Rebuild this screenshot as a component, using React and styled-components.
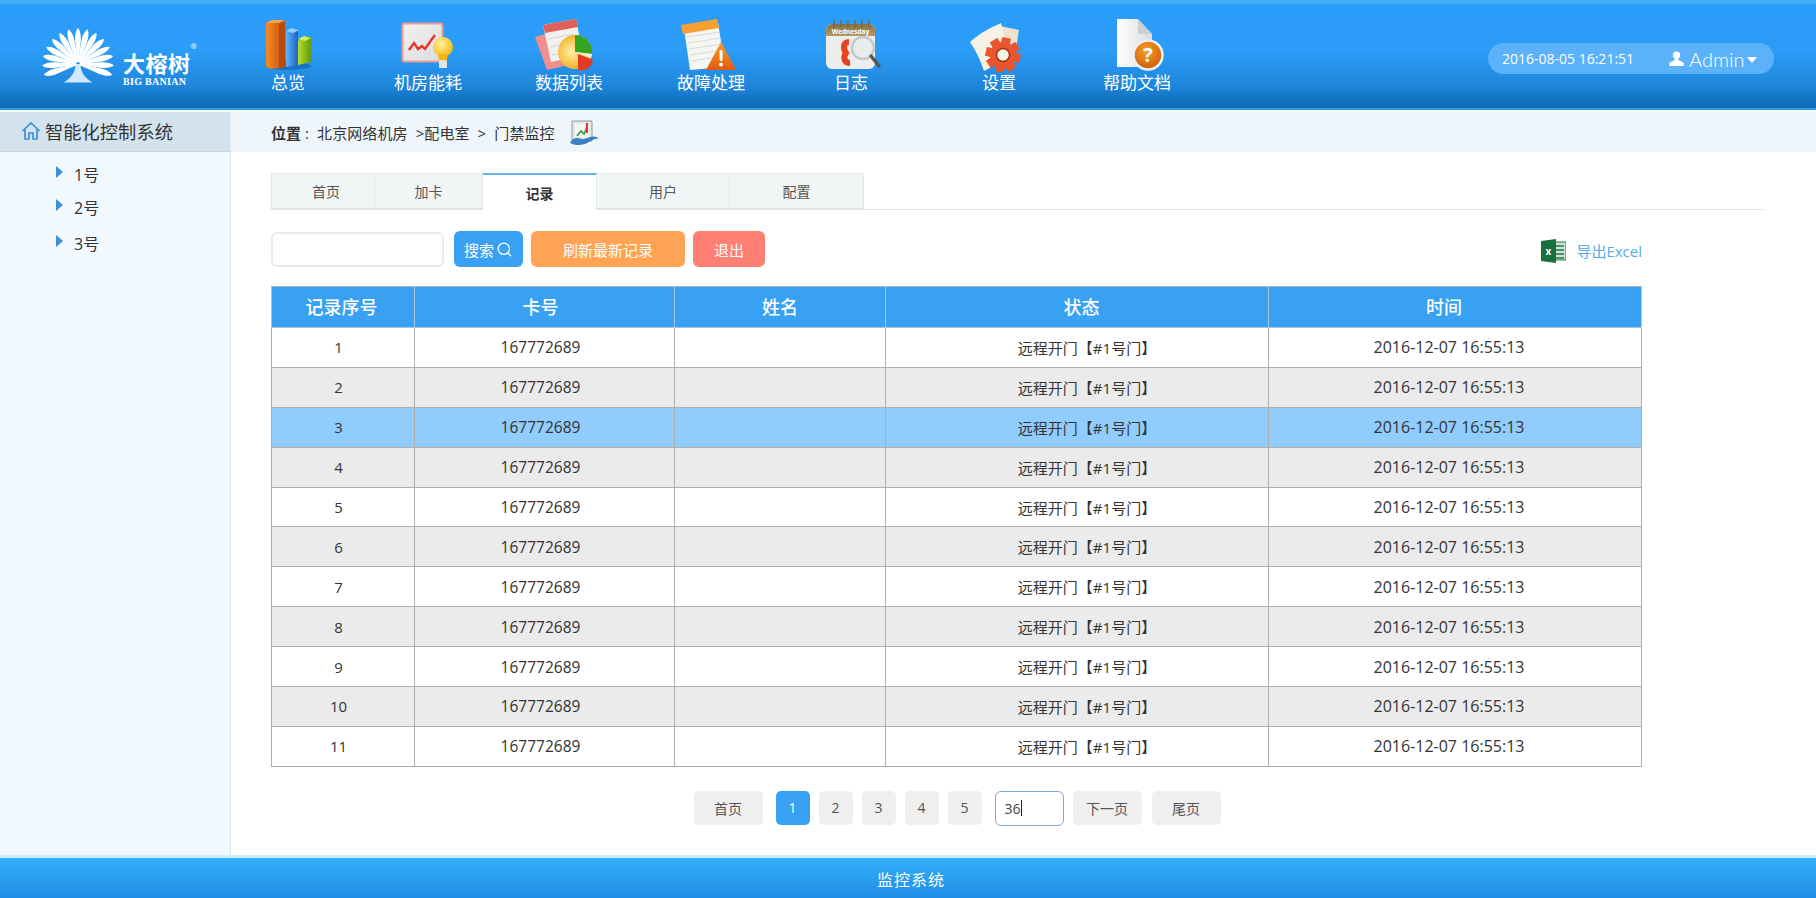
import React from 'react';
import styled, { createGlobalStyle } from 'styled-components';
import { Search } from 'lucide-react';

const FONT = `"Open Sans", "Noto Sans CJK SC", sans-serif`;

const NAV = [
  { label: '总览', x: 248, Icon: ChartIcon },
  { label: '机房能耗', x: 388, Icon: EnergyIcon },
  { label: '数据列表', x: 529, Icon: ListIcon },
  { label: '故障处理', x: 671, Icon: FaultIcon },
  { label: '日志', x: 811, Icon: LogIcon },
  { label: '设置', x: 959, Icon: GearIcon },
  { label: '帮助文档', x: 1097, Icon: HelpIcon },
];

const TREE = [
  { label: '1号', h: 33 },
  { label: '2号', h: 33 },
  { label: '3号', h: 39 },
];

const TABS = [
  { label: '首页', w: 104, pad: 6 },
  { label: '加卡', w: 108 },
  { label: '记录', w: 114, active: true },
  { label: '用户', w: 133 },
  { label: '配置', w: 134 },
];

const COLUMNS = ['记录序号', '卡号', '姓名', '状态', '时间'];
const ROWS = Array.from({ length: 11 }, (_, i) => i + 1);

function IconSvg({ x, children }) {
  return (
    <svg width="80" height="56" viewBox={`${x} 16 80 56`}>
      {children}
    </svg>
  );
}

function ChartIcon({ x }) {
  return (
    <IconSvg x={x}>
      <defs>
        <linearGradient id="barO" x1="0" x2="1" y1="0" y2="0">
          <stop offset="0" stopColor="#f58a22" />
          <stop offset="1" stopColor="#c4500f" />
        </linearGradient>
        <linearGradient id="barB" x1="0" x2="1" y1="0" y2="0">
          <stop offset="0" stopColor="#5fb4f5" />
          <stop offset="1" stopColor="#1c62c8" />
        </linearGradient>
        <linearGradient id="barG" x1="0" x2="1" y1="0" y2="0">
          <stop offset="0" stopColor="#b9dd2a" />
          <stop offset="1" stopColor="#5f9a12" />
        </linearGradient>
      </defs>
      <ellipse cx="288" cy="66" rx="23" ry="4" fill="#0b4f94" opacity=".45" />
      <path d="M298 41l7-4h6v25l-13 3z" fill="url(#barG)" />
      <path d="M298 39l6-3 7 2-6 3z" fill="#d5ec55" />
      <path d="M286 33l5-4 7 1v35l-12 2z" fill="url(#barB)" />
      <path d="M286 31l5-3 8 2-6 3z" fill="#8fd0fa" />
      <path d="M266 23l5-2h14v46l-14 2-5-2z" fill="url(#barO)" />
      <path d="M266 23l6-3h13l-6 3z" fill="#f9a24a" />
      <path d="M279 23h6v44l-6 2z" fill="#b84a0d" />
    </IconSvg>
  );
}

function EnergyIcon({ x }) {
  return (
    <IconSvg x={x}>
      <defs>
        <linearGradient id="card" x1="0" x2="1" y1="0" y2="1">
          <stop offset="0" stopColor="#f5f1ef" />
          <stop offset="1" stopColor="#d9dcdf" />
        </linearGradient>
        <radialGradient id="bulb" cx=".4" cy=".35" r=".7">
          <stop offset="0" stopColor="#fff39a" />
          <stop offset="1" stopColor="#f5b50f" />
        </radialGradient>
      </defs>
      <rect x="402.500" y="23.500" width="40" height="38" rx="2" fill="url(#card)" stroke="#eb9c95" strokeWidth="2" />
      <path d="M409 50l5-7 4 6 4-3 3 3 7-10 3-4" fill="none" stroke="#e8352a" strokeWidth="2.400" />
      <circle cx="443" cy="47" r="10" fill="url(#bulb)" />
      <path d="M438 54h10l-1 6h-8z" fill="#f5b50f" />
      <rect x="439" y="60" width="8" height="8" rx="1" fill="#dfe3e6" />
    </IconSvg>
  );
}

function ListIcon({ x }) {
  return (
    <IconSvg x={x}>
      <defs>
        <radialGradient id="pie" cx=".4" cy=".5" r=".6">
          <stop offset="0" stopColor="#fff1a8" />
          <stop offset="1" stopColor="#f2a40f" />
        </radialGradient>
      </defs>
      <path d="M535 37l24-7 14 34-26 6z" fill="#f08f8c" />
      <path d="M543 25l33-6 7 36-32 7z" fill="#f2f0ee" />
      <path d="M543 25l33-6 2 8-33 6z" fill="#e2605a" />
      <path d="M548 39l26-5M550 47l26-5M552 55l26-5" stroke="#cfd7dd" strokeWidth="1.200" />
      <circle cx="575" cy="52" r="17" fill="url(#pie)" />
      <path d="M575 52V35a17 17 0 0 1 17 19z" fill="#35a41f" />
      <path d="M575 52l17 2a17 17 0 0 1-1 4z" fill="#f2f0ee" />
      <path d="M578 54l15 6a12 12 0 0 1-15 10z" fill="#e33a22" />
    </IconSvg>
  );
}

function FaultIcon({ x }) {
  return (
    <IconSvg x={x}>
      <defs>
        <linearGradient id="warn" x1="0" x2="0" y1="0" y2="1">
          <stop offset="0" stopColor="#fba21f" />
          <stop offset="1" stopColor="#e2590c" />
        </linearGradient>
      </defs>
      <path d="M684 29l34-6 7 44-35 3z" fill="#f5f5f2" />
      <path d="M687 37l33-5M688 43l33-5M689 49l33-5M690 55l33-5M691 61l33-5" stroke="#d9dcdd" strokeWidth="1" />
      <path d="M681 25l36-6 2 9-36 6z" fill="#f9a032" />
      <path d="M721 42l15 28h-30z" fill="url(#warn)" />
      <rect x="719.600" y="50" width="3" height="11" rx="1.200" fill="#fff" />
      <circle cx="721" cy="64.500" r="1.900" fill="#fff" />
    </IconSvg>
  );
}

function LogIcon({ x }) {
  return (
    <IconSvg x={x}>
      <defs>
        <linearGradient id="calTop" x1="0" x2="0" y1="0" y2="1">
          <stop offset="0" stopColor="#8a6f3d" />
          <stop offset="1" stopColor="#b59a62" />
        </linearGradient>
      </defs>
      <rect x="826" y="24" width="49" height="45" rx="6" fill="#ededeb" />
      <path d="M826 36v-6a6 6 0 0 1 6-6h37a6 6 0 0 1 6 6v6z" fill="url(#calTop)" />
      <path d="M834 20v8M841 20v8M848 20v8M855 20v8M862 20v8M869 20v8" stroke="#6e6c66" strokeWidth="1.600" />
      <text x="850.500" y="34" textAnchor="middle" fontSize="6.500" fontWeight="700" fill="#fff" fontFamily="Open Sans, sans-serif">Wednesday</text>
      <path d="M849 42c-6 0-6 7-3 11-3 4-2 10 4 10" fill="none" stroke="#e8431f" strokeWidth="6" />
      <circle cx="863" cy="48" r="11" fill="#e7ecee" fillOpacity=".85" stroke="#c3c8ca" strokeWidth="2.400" />
      <path d="M871 56l8 10" stroke="#555" strokeWidth="3.400" strokeLinecap="round" />
    </IconSvg>
  );
}

function GearIcon({ x }) {
  const teeth = Array.from({ length: 8 }, (_, i) => i * 45);
  return (
    <IconSvg x={x}>
      <path d="M1000 26l19 4-6 36-14-4z" fill="#ece3cf" />
      <path d="M970 42c10-9 20-14 31-19 3 12 6 22 5 36l-22 12c-4-12-8-20-14-29z" fill="#f6f2e6" />
      <g fill="#e8552f">
        {teeth.map((a) => (
          <rect key={a} x="998.500" y="37.500" width="9" height="9" transform={`rotate(${a + 12} 1003 55)`} />
        ))}
        <circle cx="1003" cy="55" r="13" />
      </g>
      <circle cx="1003" cy="55" r="6.500" fill="#f6f2e6" stroke="#a63216" strokeWidth="1.500" />
    </IconSvg>
  );
}

function HelpIcon({ x }) {
  return (
    <IconSvg x={x}>
      <defs>
        <linearGradient id="doc" x1="0" x2="1" y1="0" y2="0">
          <stop offset="0" stopColor="#ffffff" />
          <stop offset="1" stopColor="#d8dde0" />
        </linearGradient>
        <radialGradient id="help" cx=".45" cy=".35" r=".7">
          <stop offset="0" stopColor="#f7a02a" />
          <stop offset="1" stopColor="#cc5507" />
        </radialGradient>
      </defs>
      <path d="M1117 19h21l14 15v33h-35z" fill="url(#doc)" />
      <path d="M1138 19l14 15h-14z" fill="#c9cfd3" />
      <circle cx="1148" cy="55" r="14.500" fill="url(#help)" stroke="#ebeef0" strokeWidth="2.500" />
      <text x="1148" y="62" textAnchor="middle" fontSize="20" fontWeight="700" fill="#fff" fontFamily="Open Sans, sans-serif">?</text>
    </IconSvg>
  );
}

function LogoMark() {
  const petals = Array.from({ length: 15 }, (_, i) => -108 + i * (216 / 14));
  return (
    <svg width="76" height="56" viewBox="0 0 76 56">
      <g fill="#fff">
        {petals.map((a) => (
          <path key={a} d="M38 0c2.600 3 3.400 9 2.600 15L38.600 34h-1.200L35.400 15c-.8-6-.2-12 2.600-15z" transform={`rotate(${a} 38 36)`} />
        ))}
      </g>
      <path d="M35.500 36h5c0 8 4 14 12 18.500h-29c8-4.500 12-10.500 12-18.500z" fill="#fff" opacity=".8" />
    </svg>
  );
}

function ExcelIcon() {
  return (
    <svg width="25" height="24" viewBox="0 0 25 24">
      <rect x="10" y="3" width="15" height="18" fill="#cfe3d4" stroke="#1f7a45" />
      <path d="M15 7h8M15 11h8M15 15h8M15 19h8" stroke="#1f7a45" strokeWidth="1.400" />
      <path d="M0 2l15-2v24L0 22z" fill="#17703e" />
      <text x="7.500" y="16" textAnchor="middle" fontSize="10" fontWeight="700" fill="#fff" fontFamily="Open Sans, sans-serif">x</text>
    </svg>
  );
}

function MonitorIcon() {
  return (
    <svg width="32" height="28" viewBox="0 0 32 28">
      <path d="M3 2h20v20H3z" fill="#e4e8e4" stroke="#8e9a9c" />
      <path d="M6 5h14v13H6z" fill="#f6f7f5" />
      <path d="M8 17l4-5 3 3 3-7" fill="none" stroke="#3b9b3f" strokeWidth="1.600" />
      <path d="M18 4v10" stroke="#d8382c" strokeWidth="2" />
      <path d="M1 24c5-9 10-3 14-4 5-1 10-5 15 0-6-1-8 3-14 5-5 1-9 2-15-1z" fill="#3f7fc4" />
    </svg>
  );
}

function HomeIcon() {
  return (
    <svg width="20" height="20" viewBox="0 0 20 20" fill="none" stroke="#3d8fd6" strokeWidth="1.700">
      <path d="M1.500 10L10 2l8.500 8M4 8.500V18h4v-6h4v6h4V8.500" />
    </svg>
  );
}

function UserIcon() {
  return (
    <svg width="15" height="15" viewBox="0 0 15 15" fill="#fff">
      <circle cx="7.500" cy="4.200" r="3.600" />
      <path d="M5.800 7h3.400l.5 2.300 5 2.500V15H.3v-3.200l5-2.500z" />
    </svg>
  );
}

export default function App() {
  return (
    <Page>
      <GlobalStyle />
      <Header>
        <Logo>
          <LogoMark />
          <LogoText>
            <LogoCn>大榕树<Registered>®</Registered></LogoCn>
            <LogoEn>BIG BANIAN</LogoEn>
          </LogoText>
        </Logo>
        <Nav>
          {NAV.map(({ label, x, Icon }) => (
            <NavItem key={label}>
              <Icon x={x} />
              <NavLabel>{label}</NavLabel>
            </NavItem>
          ))}
        </Nav>
        <UserPill>
          <PillTime>2016-08-05 16:21:51</PillTime>
          <UserIcon />
          <PillName>Admin</PillName>
          <Caret />
        </UserPill>
      </Header>

      <Body>
        <Sidebar>
          <SideTitle>
            <HomeIcon />
            智能化控制系统
          </SideTitle>
          <Tree>
            {TREE.map((item) => (
              <TreeItem key={item.label} $h={item.h}>
                <TreeArrow />
                {item.label}
              </TreeItem>
            ))}
          </Tree>
        </Sidebar>

        <Main>
          <Breadcrumb>
            <strong>位置</strong>
            <Trail>&nbsp;:&nbsp;&nbsp;北京网络机房 &nbsp;&gt;配电室 &nbsp;&gt; &nbsp;门禁监控</Trail>
            <MonitorIcon />
          </Breadcrumb>
          <Content>
            <Tabs>
              {TABS.map((tab) => (
                <Tab key={tab.label} $w={tab.w} $pad={tab.pad} $active={tab.active}>
                  {tab.label}
                </Tab>
              ))}
            </Tabs>

            <Toolbar>
              <SearchInput />
              <ActionBtn $w={69} $bg="#38a1f3">
                搜索
                <Search size={17} strokeWidth={1.800} />
              </ActionBtn>
              <ActionBtn $w={154} $bg="#ffa354">刷新最新记录</ActionBtn>
              <ActionBtn $w={72} $bg="#ff7f73">退出</ActionBtn>
              <ExportLink>
                <ExcelIcon />
                导出Excel
              </ExportLink>
            </Toolbar>

            <RecordTable>
              <thead>
                <tr>
                  {COLUMNS.map((col) => (
                    <th key={col}>{col}</th>
                  ))}
                </tr>
              </thead>
              <tbody>
                {ROWS.map((n) => (
                  <Row key={n} $even={n % 2 === 0} $selected={n === 3}>
                    <td>{n}</td>
                    <td>167772689</td>
                    <td></td>
                    <td>远程开门【#1号门】</td>
                    <td>2016-12-07 16:55:13</td>
                  </Row>
                ))}
              </tbody>
            </RecordTable>

            <Pager>
              <PageBtn $w={69} $mr={4}>首页</PageBtn>
              {[1, 2, 3, 4, 5].map((n) => (
                <PageBtn key={n} $w={34} $active={n === 1} $mr={n === 5 ? 4 : 0}>
                  {n}
                </PageBtn>
              ))}
              <PageInput>36<InputCaret /></PageInput>
              <PageBtn $w={69} $mr={1}>下一页</PageBtn>
              <PageBtn $w={69}>尾页</PageBtn>
            </Pager>
          </Content>
        </Main>
      </Body>

      <Footer>监控系统</Footer>
    </Page>
  );
}

const GlobalStyle = createGlobalStyle`
  html, body {
    margin: 0;
    padding: 0;
    background: #fff;
    font-family: ${FONT};
    overflow: hidden;
  }
  * {
    box-sizing: border-box;
  }
`;

const Page = styled.div`
  display: flex;
  flex-direction: column;
  width: 1816px;
  height: 898px;
`;

const Header = styled.header`
  display: flex;
  flex: none;
  height: 112px;
  padding-top: 16px;
  border-bottom: 2px solid #f4fafd;
  box-shadow: inset 0 -2px 0 #2c9bdc;
  background: linear-gradient(
    #46b6f8 0,
    #3fb0f8 3px,
    #2b9efa 5px,
    #2b9cf7 50px,
    #1f87dd 85px,
    #1272c2 100px,
    #0f68b4 110px
  );
`;

const Logo = styled.div`
  display: flex;
  flex: none;
  align-items: flex-start;
  width: 218px;
  padding: 12px 0 0 40px;
`;

const LogoText = styled.div`
  display: flex;
  flex-direction: column;
  gap: 3px;
  margin: 25px 0 0 7px;
  color: #fff;
`;

const LogoCn = styled.div`
  position: relative;
  font-size: 22px;
  font-weight: 700;
  line-height: 21px;
  letter-spacing: .5px;
`;

const Registered = styled.span`
  position: absolute;
  top: -12px;
  right: -7px;
  font-size: 8px;
  font-weight: 400;
  line-height: 10px;
`;

const LogoEn = styled.div`
  font-family: "Liberation Serif", serif;
  font-size: 10px;
  font-weight: 700;
  line-height: 10px;
  letter-spacing: .3px;
  white-space: nowrap;
`;

const Nav = styled.nav`
  display: grid;
  grid-template-columns: 140px 140px 142px 142px 138px 158px 118px;
  flex: none;
`;

const NavItem = styled.a`
  display: flex;
  flex-direction: column;
  align-items: center;
  height: 78px;
`;

const NavLabel = styled.span`
  color: #fff;
  font-size: 17px;
  line-height: 22px;
  white-space: nowrap;
`;

const UserPill = styled.div`
  display: flex;
  align-items: center;
  width: 286px;
  height: 31px;
  margin: 27px 42px 0 auto;
  padding-left: 14px;
  border-radius: 16px;
  background: #5cb1fb;
  color: #fff;
`;

const PillTime = styled.span`
  width: 167px;
  font-size: 14px;
  white-space: nowrap;
`;

const PillName = styled.span`
  margin-left: 5px;
  font-family: Lato, sans-serif;
  font-size: 20px;
  font-weight: 300;
`;

const Caret = styled.i`
  margin: 2px 0 0 3px;
  border-top: 6px solid #fff;
  border-left: 5px solid transparent;
  border-right: 5px solid transparent;
`;

const Body = styled.div`
  display: flex;
  flex: 1;
  min-height: 0;
`;

const Sidebar = styled.aside`
  flex: none;
  width: 231px;
  border-right: 1px solid #dfeaf0;
  background: #f1f9fe;
`;

const SideTitle = styled.div`
  display: flex;
  align-items: center;
  gap: 4px;
  height: 40px;
  padding: 0 0 2px 21px;
  border-bottom: 1px solid #c5d8e4;
  background: #d2e3ee;
  color: #333;
  font-size: 18.300px;
`;

const Tree = styled.ul`
  margin: 0;
  padding: 5px 0 0 56px;
  list-style: none;
`;

const TreeItem = styled.li`
  display: flex;
  align-items: center;
  gap: 11px;
  height: ${(p) => p.$h}px;
  color: #333;
  font-size: 16px;
`;

const TreeArrow = styled.i`
  margin-top: -3px;
  border-left: 7px solid #3d8fd6;
  border-top: 6px solid transparent;
  border-bottom: 6px solid transparent;
`;

const Main = styled.main`
  flex: 1;
  min-width: 0;
`;

const Breadcrumb = styled.div`
  display: flex;
  align-items: center;
  height: 40px;
  padding-left: 40px;
  background: #eef6fb;
  color: #333;
  font-size: 15px;
  strong {
    font-weight: 700;
  }
  svg {
    margin: 2px 0 0 14px;
  }
`;

const Trail = styled.span`
  letter-spacing: .1px;
`;

const Content = styled.div`
  padding: 21px 0 0 40px;
`;

const Tabs = styled.div`
  display: flex;
  width: 1494px;
  height: 37px;
  border-bottom: 1px solid #dde3e6;
`;

const Tab = styled.div`
  display: flex;
  align-items: center;
  justify-content: center;
  width: ${(p) => p.$w}px;
  height: ${(p) => (p.$active ? 37 : 36)}px;
  padding-left: ${(p) => p.$pad || 0}px;
  border: 1px solid #e2e8ea;
  border-left-width: 0;
  border-top: ${(p) => (p.$active ? '2px solid #62b5e5' : '1px solid #e6ebed')};
  border-bottom: ${(p) => (p.$active ? 'none' : '1px solid #dde3e6')};
  background: ${(p) => (p.$active ? '#fff' : '#f1f5f6')};
  color: ${(p) => (p.$active ? '#333' : '#555')};
  font-size: 14px;
  font-weight: ${(p) => (p.$active ? 700 : 400)};
  &:first-child {
    border-left-width: 1px;
  }
`;

const Toolbar = styled.div`
  display: flex;
  align-items: center;
  gap: 8px;
  width: 1371px;
  height: 36px;
  margin-top: 21px;
`;

const SearchInput = styled.div`
  width: 173px;
  height: 35px;
  margin-right: 2px;
  border: 2px solid #e8eaeb;
  border-radius: 6px;
  background: #fff;
`;

const ActionBtn = styled.button`
  display: flex;
  align-items: center;
  justify-content: center;
  gap: 2px;
  width: ${(p) => p.$w}px;
  height: 36px;
  padding: 0;
  border: 0;
  border-radius: 6px;
  background: ${(p) => p.$bg};
  color: #fff;
  font-family: ${FONT};
  font-size: 15px;
`;

const ExportLink = styled.a`
  display: flex;
  align-items: center;
  gap: 10px;
  margin: 3px 0 0 auto;
  color: #5aa9e8;
  font-size: 15px;
`;

const RecordTable = styled.table`
  width: 1371px;
  margin-top: 19px;
  border-collapse: collapse;
  table-layout: fixed;
  font-size: 15px;
  text-align: center;
  color: #333;
  th {
    height: 41px;
    padding: 0 0 3px;
    border: 1px solid #a9c8e0;
    border-top-color: #a9b4bc;
    background: #38a1f3;
    color: #fff;
    font-size: 18px;
    font-weight: 500;
  }
  td {
    height: 39.900px;
    padding: 0;
    border: 1px solid #aeaeae;
  }
  th:nth-child(1), td:nth-child(1) {
    width: 143px;
    padding-right: 3px;
  }
  td:nth-child(1) {
    padding-right: 9px;
  }
  th:nth-child(2), td:nth-child(2) {
    width: 260px;
    padding-right: 8px;
  }
  td:nth-child(2) {
    font-size: 15.500px;
  }
  th:nth-child(3), td:nth-child(3) {
    width: 211px;
  }
  th:nth-child(4), td:nth-child(4) {
    width: 383px;
    padding-left: 9px;
  }
  td:nth-child(4) {
    padding-left: 20px;
  }
  th:nth-child(5) {
    padding-right: 22px;
  }
  td:nth-child(5) {
    padding-right: 12px;
    font-size: 16px;
  }
`;

const Row = styled.tr`
  background: ${(p) => (p.$selected ? '#90cdfc' : p.$even ? '#ebebeb' : '#fff')};
`;

const Pager = styled.div`
  display: flex;
  justify-content: center;
  gap: 9px;
  width: 1372px;
  margin-top: 24px;
`;

const PageBtn = styled.button`
  width: ${(p) => p.$w}px;
  height: 34px;
  margin-right: ${(p) => p.$mr || 0}px;
  padding: 0;
  border: 0;
  border-radius: 5px;
  background: ${(p) => (p.$active ? '#38a1f3' : '#efefef')};
  color: ${(p) => (p.$active ? '#fff' : '#555')};
  font-family: ${FONT};
  font-size: 14px;
`;

const PageInput = styled.div`
  display: flex;
  align-items: center;
  width: 69px;
  height: 35px;
  padding-left: 9px;
  border: 1.500px solid #7da9d6;
  border-radius: 6px;
  background: #fff;
  color: #444;
  font-size: 14px;
`;

const InputCaret = styled.i`
  width: 1px;
  height: 16px;
  background: #222;
`;

const Footer = styled.footer`
  display: flex;
  flex: none;
  align-items: center;
  justify-content: center;
  height: 43px;
  padding: 2px 0 0 6px;
  border-top: 3px solid #cfeefc;
  background: linear-gradient(#36b0fb, #1f8ce6);
  color: #fff;
  font-size: 16px;
  letter-spacing: 1px;
`;
